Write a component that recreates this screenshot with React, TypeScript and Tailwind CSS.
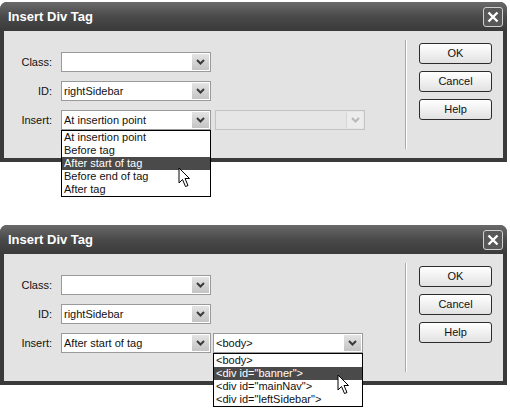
import React from "react";

type SelectProps = {
  value: string;
  disabled?: boolean;
  options?: string[];
  highlighted?: number;
  cursorClass?: string;
};

const Chevron = ({ faint = false }: { faint?: boolean }) => (
  <svg width="9" height="6" viewBox="0 0 9 6">
    <path
      d="M1 1 L4.5 4.5 L8 1"
      fill="none"
      stroke={faint ? "#b8b8b8" : "#3a3a3a"}
      strokeWidth="2"
    />
  </svg>
);

const Pointer = () => (
  <svg width="13" height="21" viewBox="0 0 13 21">
    <path
      d="M1 1 L1 16 L4.5 12.5 L7.5 19.5 L10 18.5 L7 11.5 L11.5 11.5 Z"
      fill="#fff"
      stroke="#000"
      strokeWidth="1"
    />
  </svg>
);

const Select = ({ value, disabled = false, options, highlighted, cursorClass }: SelectProps) => (
  <div className="relative w-[150px] h-[20px]">
    <div
      className={
        disabled
          ? "flex items-center h-full border border-[#c4c4c4] bg-[#e6e6e6]"
          : "flex items-center h-full border border-[#9a9a9a] bg-white"
      }
    >
      <span className="flex-1 pl-[2px] text-[11px] leading-none text-[#111] whitespace-nowrap">
        {value}
      </span>
      <div
        className={
          disabled
            ? "mr-[1px] w-[17px] h-[16px] flex items-center justify-center bg-[#ececec] border-l border-[#d6d6d6]"
            : "mr-[1px] w-[17px] h-[16px] flex items-center justify-center bg-gradient-to-b from-[#e4e4e4] to-[#c4c4c4]"
        }
      >
        <Chevron faint={disabled} />
      </div>
    </div>
    {options && (
      <div className="absolute left-0 top-full w-[150px] border border-black bg-white z-10">
        {options.map((o, i) => (
          <div
            key={o}
            className={
              i === highlighted
                ? "h-[13px] pl-[2px] text-[11px] leading-[13px] bg-[#4a4a4a] text-white whitespace-nowrap"
                : "h-[13px] pl-[2px] text-[11px] leading-[13px] text-[#111] whitespace-nowrap"
            }
          >
            {o}
          </div>
        ))}
        {cursorClass && (
          <div className={cursorClass}>
            <Pointer />
          </div>
        )}
      </div>
    )}
  </div>
);

const Button = ({ label }: { label: string }) => (
  <div className="w-[73px] h-[21px] flex items-center justify-center rounded-[3px] border border-[#2c2c2c] bg-gradient-to-b from-white to-[#e2e2e2] text-[11px] text-[#111]">
    {label}
  </div>
);

const Row = ({ label, children }: { label: string; children: React.ReactNode }) => (
  <div className="flex items-center gap-[9px]">
    <div className="w-[48px] text-right text-[11px] text-[#111]">{label}</div>
    {children}
  </div>
);

const Dialog = ({ second }: { second: "first" | "second" }) => (
  <div className="relative w-[507px] rounded-t-[7px] bg-[#3a3a3a]">
    <div className="h-[29px] rounded-t-[7px] flex items-center justify-between pl-[8px] pr-[4px] bg-gradient-to-b from-[#6a6a6a] via-[#4a4a4a] to-[#3a3a3a]">
      <span className="text-[13px] font-bold text-white">Insert Div Tag</span>
      <div className="w-[20px] h-[20px] flex items-center justify-center rounded-[3px] border border-[#d0d0d0] bg-[#585858]">
        <svg width="12" height="12" viewBox="0 0 12 12">
          <path d="M1.5 1.5 L10.5 10.5 M10.5 1.5 L1.5 10.5" stroke="#fff" strokeWidth="2.4" />
        </svg>
      </div>
    </div>
    <div className="mx-[4px] mb-[4px] h-[127px] flex bg-[#e3e3e3]">
      <div className="w-[401px] pt-[21px] flex flex-col gap-[9px]">
        <Row label="Class:">
          <Select value="" />
        </Row>
        <Row label="ID:">
          <Select value="rightSidebar" />
        </Row>
        <Row label="Insert:">
          {second === "first" ? (
            <Select
              value="At insertion point"
              options={[
                "At insertion point",
                "Before tag",
                "After start of tag",
                "Before end of tag",
                "After tag",
              ]}
              highlighted={2}
              cursorClass="absolute left-[116px] top-[36px]"
            />
          ) : (
            <Select value="After start of tag" />
          )}
          <div className={second === "first" ? "-ml-[5px]" : "-ml-[7px]"}>
            {second === "first" ? (
              <Select value="" disabled />
            ) : (
              <Select
                value="<body>"
                options={[
                  "<body>",
                  '<div id="banner">',
                  '<div id="mainNav">',
                  '<div id="leftSidebar">',
                ]}
                highlighted={1}
                cursorClass="absolute left-[123px] top-[20px]"
              />
            )}
          </div>
        </Row>
      </div>
      <div className="my-[9px] w-[2px] border-l border-[#a8a8a8] border-r border-r-white" />
      <div className="ml-[12px] pt-[12px] flex flex-col gap-[7px]">
        <Button label="OK" />
        <Button label="Cancel" />
        <Button label="Help" />
      </div>
    </div>
  </div>
);

export default function App() {
  return (
    <div className="w-[510px] h-[414px] bg-white pt-[2px] flex flex-col gap-[63px] font-['Liberation_Sans',Arial,sans-serif]">
      <Dialog second="first" />
      <Dialog second="second" />
    </div>
  );
}
